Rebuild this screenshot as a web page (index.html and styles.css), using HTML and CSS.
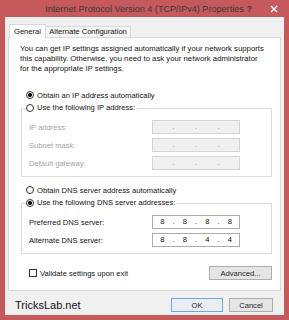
FILE: index.html
```html
<!DOCTYPE html>
<html>
<head>
<meta charset="utf-8">
<title>Internet Protocol Version 4 (TCP/IPv4) Properties</title>
<link rel="stylesheet" href="styles.css">
</head>
<body>
<div class="window">
  <div class="titlebar">
    <div class="title">Internet Protocol Version 4 (TCP/IPv4) Properties</div>
    <div class="caption-btns">
      <span class="help">?</span>
      <svg class="close" width="8" height="8" viewBox="0 0 8 8"><path d="M1 1 L7 7 M7 1 L1 7" stroke="#fff" stroke-width="1.4" fill="none"/></svg>
    </div>
  </div>
  <div class="client">
    <div class="tabs">
      <div class="tab active">General</div>
      <div class="tab">Alternate Configuration</div>
    </div>
    <div class="panel">
      <p class="intro">You can get IP settings assigned automatically if your network supports<br>this capability. Otherwise, you need to ask your network administrator<br>for the appropriate IP settings.</p>
      <div class="opt top first"><span class="radio on"></span>Obtain an IP address automatically</div>
      <fieldset class="group">
        <legend><span class="opt"><span class="radio"></span>Use the following IP address:</span></legend>
        <div class="field first-field disabled"><span class="label">IP address:</span><span class="ipbox"><span></span><span>.</span><span></span><span>.</span><span></span><span>.</span><span></span></span></div>
        <div class="field disabled"><span class="label">Subnet mask:</span><span class="ipbox"><span></span><span>.</span><span></span><span>.</span><span></span><span>.</span><span></span></span></div>
        <div class="field disabled"><span class="label">Default gateway:</span><span class="ipbox"><span></span><span>.</span><span></span><span>.</span><span></span><span>.</span><span></span></span></div>
      </fieldset>
      <div class="opt top dns-first"><span class="radio"></span>Obtain DNS server address automatically</div>
      <fieldset class="group">
        <legend><span class="opt"><span class="radio on"></span>Use the following DNS server addresses:</span></legend>
        <div class="field first-field"><span class="label">Preferred DNS server:</span><span class="ipbox"><span>8</span><span>.</span><span>8</span><span>.</span><span>8</span><span>.</span><span>8</span></span></div>
        <div class="field"><span class="label">Alternate DNS server:</span><span class="ipbox"><span>8</span><span>.</span><span>8</span><span>.</span><span>4</span><span>.</span><span>4</span></span></div>
      </fieldset>
      <div class="panel-footer">
        <div class="check-row"><span class="checkbox"></span>Validate settings upon exit</div>
        <div class="btn advanced">Advanced...</div>
      </div>
    </div>
    <div class="bottom">
      <span class="brand">TricksLab.net</span>
      <div class="btn default ok">OK</div>
      <div class="btn cancel">Cancel</div>
    </div>
  </div>
</div>
</body>
</html>
```
FILE: styles.css
```css
html, body {
  margin: 0;
  padding: 0;
}
body {
  width: 289px;
  height: 320px;
  overflow: hidden;
  background: #c5595c;
  font-family: "Liberation Sans", Arial, sans-serif;
  font-size: 7.6px;
  color: #141414;
}
.window {
  display: flex;
  flex-direction: column;
  height: 320px;
}
.titlebar {
  height: 17px;
  display: grid;
  align-items: center;
}
.title, .caption-btns {
  grid-area: 1 / 1;
}
.title {
  justify-self: center;
  font-size: 9.1px;
  color: #3a3a3a;
  padding-top: 1px;
}
.caption-btns {
  justify-self: end;
  display: flex;
  align-items: center;
  gap: 18px;
  margin-right: 11px;
}
.help {
  font-size: 8.5px;
  font-weight: bold;
  color: #3a3a3a;
}
.close {
  display: block;
}
.client {
  flex: 1;
  margin: 0 5px 5px 5px;
  background: #f0f0f0;
  padding: 7px 3px 0 3px;
  display: flex;
  flex-direction: column;
}
.tabs {
  display: flex;
  align-items: flex-end;
  height: 14px;
  margin-left: 1px;
  margin-bottom: -1px;
  position: relative;
  z-index: 1;
}
.tab {
  box-sizing: border-box;
  height: 11px;
  margin-bottom: 1px;
  width: 85px;
  background: #f5f5f5;
  border: 1px solid #d9d9d9;
  border-left: none;
  border-bottom: none;
  text-align: center;
  line-height: 10px;
}
.tab.active {
  height: 14px;
  margin-bottom: 0;
  width: 37px;
  background: #fff;
  border-left: 1px solid #d9d9d9;
  line-height: 13px;
}
.panel {
  box-sizing: border-box;
  height: 254px;
  background: #fff;
  border: 1px solid #d9d9d9;
  padding: 6px 8px 0 12px;
  display: flex;
  flex-direction: column;
}
.intro {
  margin: 0 0 0 -1px;
  line-height: 10px;
  font-size: 7.75px;
}
.opt {
  display: flex;
  align-items: center;
  height: 12px;
  white-space: nowrap;
}
.opt.top {
  margin-left: 5px;
}
.opt.first {
  margin-top: 15px;
}
.opt.dns-first {
  margin-top: 7px;
}
.radio {
  box-sizing: border-box;
  width: 8px;
  height: 8px;
  border: 1px solid #333;
  border-radius: 50%;
  background: #fff;
  margin-right: 3px;
  flex: none;
}
.radio.on {
  background: radial-gradient(circle, #111 0 1.8px, #fff 2.3px);
}
.group {
  margin: 1px 0 0 0;
  padding: 0 0 6px 4px;
  border: 1px solid #dcdcdc;
  min-width: 0;
}
.group legend {
  padding: 0 2px 0 0;
  line-height: 12px;
}
.field {
  display: flex;
  align-items: center;
  height: 14px;
  margin-top: 4px;
}
.field.first-field {
  margin-top: 6px;
}
.label {
  width: 123px;
  margin-left: 3px;
  flex: none;
}
.ipbox {
  box-sizing: border-box;
  width: 88px;
  height: 14px;
  border: 1px solid #acacac;
  background: #fff;
  display: grid;
  grid-template-columns: 1fr 4px 1fr 4px 1fr 4px 1fr;
  align-items: center;
  text-align: center;
  line-height: 12px;
}
.field.disabled .label {
  color: #a3a3a3;
}
.field.disabled .ipbox {
  background: #f0f0f0;
  border-color: #d4d4d4;
  color: #8a8a8a;
}
.panel-footer {
  margin-top: 12px;
  height: 14px;
  display: flex;
  align-items: center;
  justify-content: space-between;
}
.check-row {
  display: flex;
  align-items: center;
  margin-left: 8px;
}
.checkbox {
  box-sizing: border-box;
  width: 8px;
  height: 8px;
  border: 1px solid #333;
  background: #fff;
  margin-right: 3px;
}
.btn {
  box-sizing: border-box;
  height: 14px;
  border: 1px solid #adadad;
  background: #e5e5e5;
  display: flex;
  align-items: center;
  justify-content: center;
  color: #1e1e1e;
}
.btn.advanced {
  width: 63px;
}
.bottom {
  margin-top: 7px;
  height: 14px;
  display: flex;
  align-items: center;
}
.brand {
  margin-left: 7px;
  font-size: 11px;
  color: #111;
  margin-right: auto;
}
.btn.ok {
  width: 52px;
  border-color: #6fa8dc;
  background: #e8eef4;
}
.btn.cancel {
  width: 44px;
  margin-left: 6px;
  margin-right: 8px;
}
```
